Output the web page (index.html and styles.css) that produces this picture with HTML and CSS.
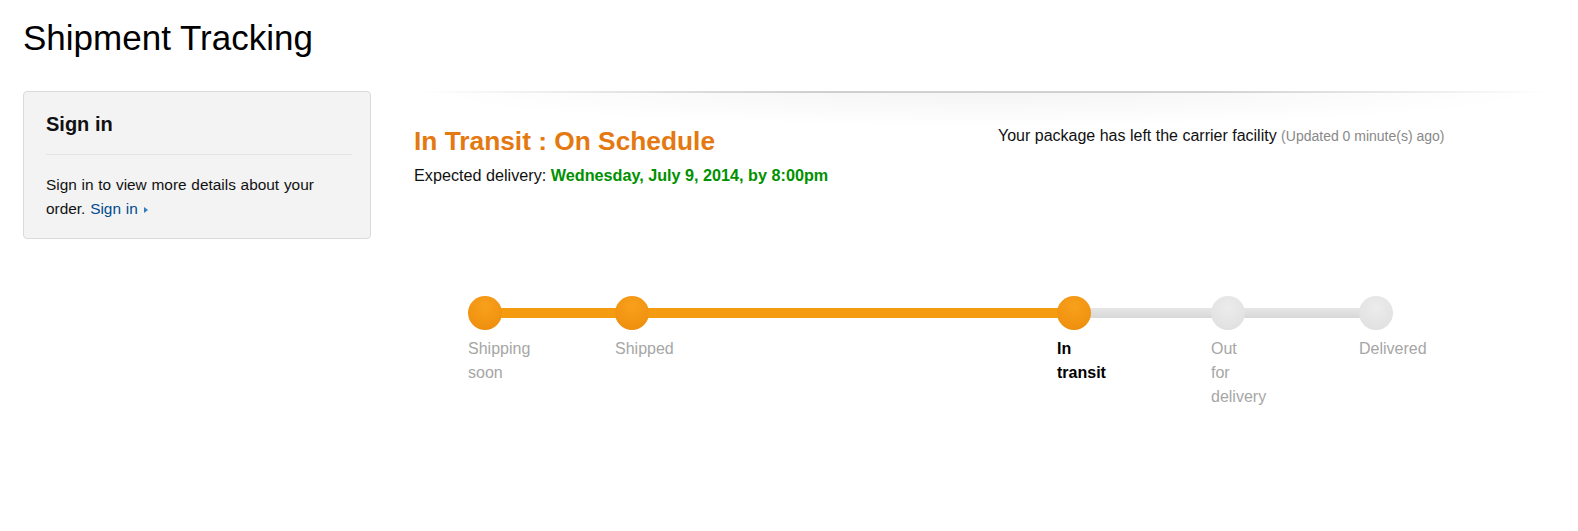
FILE: index.html
```html
<!DOCTYPE html>
<html lang="en">

<head>
    <meta charset="UTF-8">
    <meta name="viewport" content="width=device-width, initial-scale=1.0">
    <title>Shipment Tracking</title>
    <link rel="stylesheet" href="styles.css">
</head>

<body>
    <div class="page">
        <h1>Shipment Tracking</h1>
        <div class="layout">
            <div class="signin-box">
                <h3>Sign in</h3>
                <div class="divider"></div>
                <p>Sign in to view more details about your order. <a href="#" class="signin-link">Sign in</a><span class="caret"></span></p>
            </div>

            <div class="main">
                <div class="shadow-rule"></div>
                <div class="status-row">
                    <div class="status">
                        <h2>In Transit : On Schedule</h2>
                        <p class="expected">Expected delivery: <span class="date">Wednesday, July 9, 2014, by 8:00pm</span></p>
                    </div>
                    <p class="event">Your package has left the carrier facility <span class="updated">(Updated 0 minute(s) ago)</span></p>
                </div>

                <div class="track">
                    <div class="bar"></div>
                    <div class="bar bar-done" style="width: 588px;"></div>
                    <div class="step step-1 done">
                        <div class="dot"></div>
                        <div class="label">Shipping soon</div>
                    </div>
                    <div class="step step-2 done">
                        <div class="dot"></div>
                        <div class="label">Shipped</div>
                    </div>
                    <div class="step step-3 done current">
                        <div class="dot"></div>
                        <div class="label">In transit</div>
                    </div>
                    <div class="step step-4">
                        <div class="dot"></div>
                        <div class="label">Out for delivery</div>
                    </div>
                    <div class="step">
                        <div class="dot"></div>
                        <div class="label">Delivered</div>
                    </div>
                </div>
            </div>
        </div>
    </div>
</body>

</html>
```

FILE: styles.css
```css
body {
    margin: 0;
    background-color: #fff;
    color: #111;
    font-family: "Liberation Sans", Arial, sans-serif;
}

.page {
    padding: 18px 23px;
}

h1 {
    margin: 0;
    font-size: 35px;
    font-weight: normal;
    line-height: 40px;
    color: #000;
}

.layout {
    display: flex;
    align-items: flex-start;
    margin-top: 33px;
}

.signin-box {
    width: 306px;
    flex-shrink: 0;
    padding: 20px 18px 17px 22px;
    background-color: #f3f3f3;
    border: 1px solid #dadada;
    border-radius: 4px;
}

.signin-box h3 {
    margin: 0;
    font-size: 20px;
    line-height: 24px;
    color: #111;
}

.divider {
    height: 1px;
    margin: 18px 0 18px;
    background-color: #e3e3e3;
}

.signin-box p {
    margin: 0;
    font-size: 15.4px;
    line-height: 24px;
    word-spacing: 0.5px;
}

.signin-link {
    color: #004b91;
    text-decoration: none;
}

.caret {
    display: inline-block;
    margin-left: 6px;
    border-left: 4px solid #2f7fc1;
    border-top: 3.5px solid transparent;
    border-bottom: 3.5px solid transparent;
    vertical-align: 1px;
}

.main {
    flex: 1;
    margin-left: 43px;
}

.shadow-rule {
    height: 35px;
    margin: 0 5px 0 5px;
    background:
        linear-gradient(to right, rgba(200, 200, 200, 0), #cfcfcf 35%, #d2d2d2 70%, rgba(200, 200, 200, 0)) top / 100% 2px no-repeat,
        radial-gradient(ellipse 50% 100% at 50% 0, rgba(0, 0, 0, 0.045), rgba(0, 0, 0, 0));
}

.status-row {
    display: flex;
}

.status {
    width: 584px;
}

h2 {
    margin: 0;
    font-size: 26.3px;
    line-height: 30px;
    color: #e47911;
}

.expected {
    margin: 9px 0 0;
    font-size: 16.2px;
    line-height: 20px;
}

.date {
    font-weight: bold;
    color: #009100;
}

.event {
    margin: 0;
    font-size: 16px;
    line-height: 20px;
    color: #111;
}

.updated {
    font-size: 14px;
    color: #888;
}

.track {
    position: relative;
    display: flex;
    margin: 111px 0 0 54px;
}

.bar {
    position: absolute;
    top: 12px;
    left: 17px;
    width: 889px;
    height: 10px;
    background: linear-gradient(#e6e6e6, #d7d7d7);
}

.bar-done {
    background: #f59b10;
}

.step {
    position: relative;
    flex-shrink: 0;
}

.step-1 {
    width: 147px;
}

.step-2 {
    width: 442px;
}

.step-3 {
    width: 154px;
}

.step-4 {
    width: 148px;
}

.dot {
    width: 34px;
    height: 34px;
    border-radius: 50%;
    background: radial-gradient(circle at 50% 35%, #ececec, #e2e2e2 70%, #d6d6d6);
}

.done .dot {
    background: radial-gradient(circle at 50% 30%, #f8a01c, #f0920f 70%, #e5860b);
}

.label {
    width: 34px;
    margin-top: 7px;
    font-size: 16px;
    line-height: 24px;
    color: #a6a6a6;
}

.current .label {
    font-weight: bold;
    color: #000;
}
```
